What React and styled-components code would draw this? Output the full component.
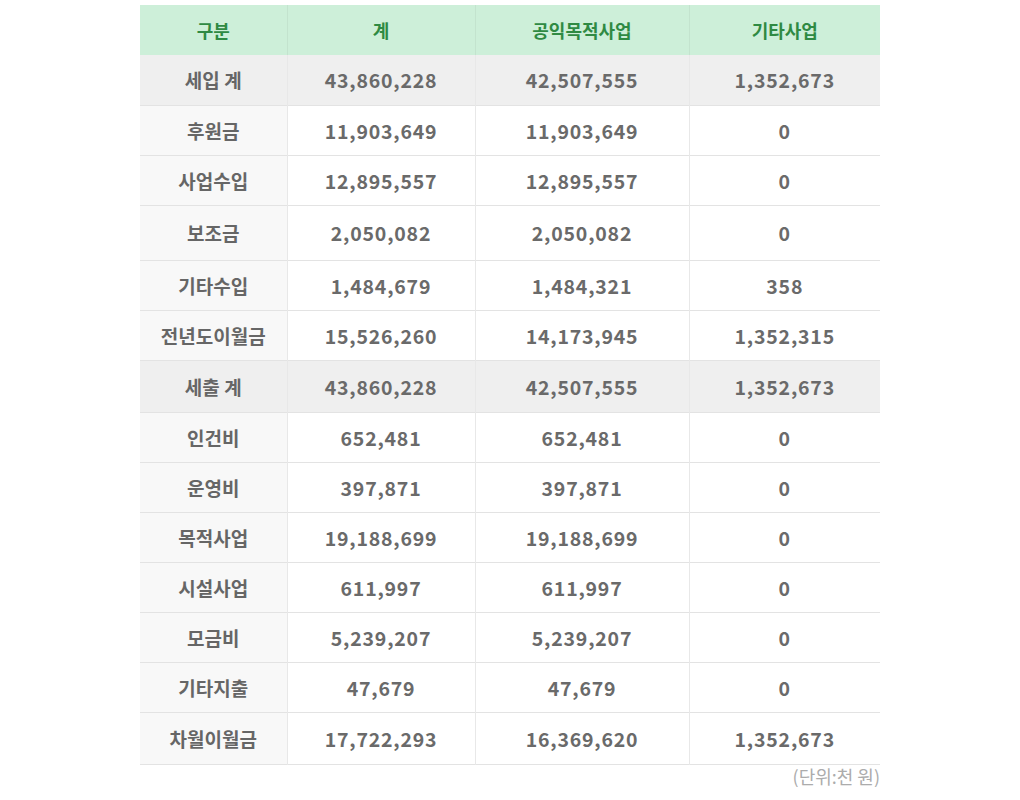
import React from "react";
import styled, { createGlobalStyle } from "styled-components";

const GlobalStyle = createGlobalStyle`
  body {
    margin: 0;
    background: #ffffff;
    font-family: "Noto Sans CJK KR", "Noto Sans", sans-serif;
  }
`;

const Wrap = styled.div`
  width: 740px;
  margin: 0 auto;
  padding-top: 5px;
`;

const Table = styled.table`
  width: 100%;
  border-collapse: collapse;
  table-layout: fixed;
`;

const Th = styled.th`
  height: 50px;
  padding: 0;
  background: #cdefd9;
  color: #2f8a43;
  font-size: 18px;
  font-weight: 700;
  text-align: center;
  border-left: 1px solid #c3e3ce;
  &:first-child {
    border-left: none;
  }
`;

const Tr = styled.tr`
  height: ${(p) => p.h || 50}px;
  background: ${(p) => (p.total ? "#efefef" : "#ffffff")};
  border-bottom: 1px solid #e3e3e3;
`;

const Label = styled.td`
  padding: 0;
  text-align: center;
  font-size: 19px;
  font-weight: 700;
  color: #666666;
  background: ${(p) => (p.total ? "#efefef" : "#f8f8f8")};
`;

const Num = styled.td`
  padding: 0;
  text-align: center;
  font-size: 19.5px;
  font-weight: 700;
  letter-spacing: 0.8px;
  color: #6a6a6a;
  border-left: 1px solid #e8e8e8;
`;

const Unit = styled.div`
  text-align: right;
  margin-top: 0;
  font-size: 18px;
  color: #acacac;
  line-height: 22px;
`;

const rows = [
  { label: "세입 계", v: ["43,860,228", "42,507,555", "1,352,673"], total: true },
  { label: "후원금", v: ["11,903,649", "11,903,649", "0"] },
  { label: "사업수입", v: ["12,895,557", "12,895,557", "0"] },
  { label: "보조금", v: ["2,050,082", "2,050,082", "0"], h: 55 },
  { label: "기타수입", v: ["1,484,679", "1,484,321", "358"] },
  { label: "전년도이월금", v: ["15,526,260", "14,173,945", "1,352,315"] },
  { label: "세출 계", v: ["43,860,228", "42,507,555", "1,352,673"], total: true, h: 52 },
  { label: "인건비", v: ["652,481", "652,481", "0"] },
  { label: "운영비", v: ["397,871", "397,871", "0"] },
  { label: "목적사업", v: ["19,188,699", "19,188,699", "0"] },
  { label: "시설사업", v: ["611,997", "611,997", "0"] },
  { label: "모금비", v: ["5,239,207", "5,239,207", "0"] },
  { label: "기타지출", v: ["47,679", "47,679", "0"] },
  { label: "차월이월금", v: ["17,722,293", "16,369,620", "1,352,673"], h: 52 },
];

export default function App() {
  return (
    <>
      <GlobalStyle />
      <Wrap>
        <Table>
          <colgroup>
            <col style={{ width: 147 }} />
            <col style={{ width: 188 }} />
            <col style={{ width: 214 }} />
            <col style={{ width: 191 }} />
          </colgroup>
          <thead>
            <tr>
              <Th>구분</Th>
              <Th>계</Th>
              <Th>공익목적사업</Th>
              <Th>기타사업</Th>
            </tr>
          </thead>
          <tbody>
            {rows.map((r) => (
              <Tr key={r.label} total={r.total} h={r.h}>
                <Label total={r.total}>{r.label}</Label>
                {r.v.map((n, i) => (
                  <Num key={i}>{n}</Num>
                ))}
              </Tr>
            ))}
          </tbody>
        </Table>
        <Unit>(단위:천 원)</Unit>
      </Wrap>
    </>
  );
}
